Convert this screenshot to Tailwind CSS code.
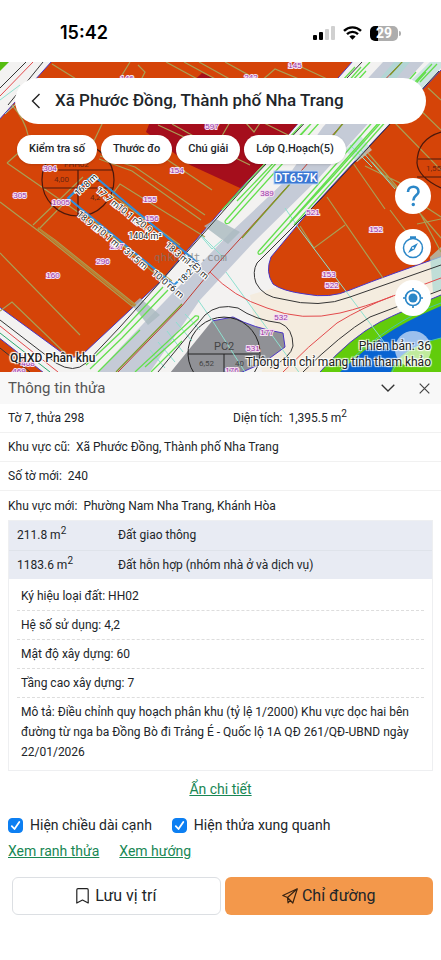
<!DOCTYPE html>
<html lang="vi">
<head>
    <meta charset="UTF-8">
    <meta name="viewport" content="width=device-width, initial-scale=1.0">
    <title>Thông tin thửa</title>
    <script src="https://cdn.jsdelivr.net/npm/@tailwindcss/browser@4"></script>
</head>
<body class="bg-white font-[Roboto,sans-serif] text-[#212529]">

    <!-- Status bar -->
    <div class="h-[62px] pl-15 pr-10 pt-1 flex items-center justify-between text-black">
        <span class="font-[Inter,sans-serif] text-lg font-semibold">15:42</span>
        <div class="flex items-center gap-2">
            <svg class="w-[22px] h-[14px]" viewBox="0 0 22 14">
                <rect x="0" y="9" width="4" height="5" rx="1"/>
                <rect x="6" y="6" width="4" height="8" rx="1"/>
                <g fill="#d0d0d0"><rect x="12" y="3" width="4" height="11" rx="1"/><rect x="18" y="0" width="4" height="14" rx="1"/></g>
            </svg>
            <svg class="w-[19px] h-[14px]" viewBox="0 0 19 14" fill="none" stroke="#000" stroke-width="2.4">
                <path d="M1 4.8a12.2 12.2 0 0 1 17 0M4 8.1a7.9 7.9 0 0 1 11 0"/>
                <path d="M6.4 10.6a4.6 4.6 0 0 1 6.2 0L9.5 13.8z" fill="#000" stroke="none"/>
            </svg>
            <div class="flex items-center gap-px">
                <div class="w-7 h-[15px] rounded-[5px] bg-linear-to-r from-black from-30% to-[#adadad] to-30% flex items-center justify-center text-white text-sm font-bold">29</div>
                <div class="w-[2px] h-[5px] rounded-r bg-[#adadad]"></div>
            </div>
        </div>
    </div>

    <!-- Map -->
    <section class="relative h-[310px] overflow-hidden px-[15px] pt-4 bg-[#f3f2f1]">
        <svg class="absolute inset-0 w-full h-full" viewBox="0 62 441 310" preserveAspectRatio="xMidYMid slice" fill="none">
            <!-- side road -->
            <path d="M250 295L285 285L441 258V372H262z" fill="#f4ecdf"/>
            <!-- planned land -->
            <g fill="#d54408" stroke="#4b35c5" stroke-width="1">
                <path d="M52 61L353 61L220 212L160 282L84 353Q73 362 61 352L-2 306V121z"/>
                <path d="M443 68L402 111L353 163L310 210L271 257Q265 272 273 284Q282 291 305 294Q330 299 350 290Q370 282 395 273L443 256z"/>
                <path d="M-2 337L44 373H-2z"/>
            </g>
            <path d="M0 62H9L0 71z" fill="#56bd10"/>
            <path d="M150 122L202 73L218 80L299 122L263 165L240 188L190 165L146 132z" fill="#a50e1c"/>

            <!-- main road -->
            <path d="M98 372L120 348L230 233L283 183L323 127L383 62H424L365 127L317 180L253 243L200 300L150 372z" fill="#c5cbd7"/>
            <path d="M204 226L216 219L240 232L228 244zM132 305L140 298L160 315L148 325z" fill="#a9b9bf" opacity=".8"/>
            <path d="M398 93L430 62H441V68L402 110zM345 150L360 135L372 150L357 162z" fill="#bcdedb" opacity=".7"/>
            <path d="M394 62H410L362 119H345zM430 257L441 247V290L433 292z" fill="#a9d8d3" opacity=".7"/>

            <!-- park and river -->
            <path d="M441 295Q400 312 380 322Q350 338 320 372H441z" fill="#62cc0b"/>
            <path d="M441 306Q405 321 382 337Q361 352 340 372H391Q397 349 441 338z" fill="#0863d2"/>
            <path d="M441 303Q390 321 340 370M441 338Q404 346 392 372" stroke="#48c6a7"/>
            <path d="M441 295Q400 312 380 322Q350 338 320 372" stroke="#4b35c5"/>

            <!-- PC2 plot -->
            <path d="M170 373L212 321L233 317Q253 328 283 333L285 347L263 363L240 373z" fill="#909196"/>
            <path d="M212 321L233 317Q253 328 283 333L285 347L263 363L240 373" stroke="#4b35c5"/>
            <path d="M194 373A36 36 0 1 1 254 373M188 354H259M224 354V372" stroke="#222"/>

            <!-- parcel borders -->
            <g stroke="#a99f55" stroke-width="1.2">
                <path d="M52 64L102 95M130 62L119 80M138 65L145 72L140 82M166 62L214 88M184 62L232 88M199 62L246 88M225 62L285 95M260 82L275 69L330 92M295 64L338 84"/>
                <path d="M12 105Q25 120 28 135M103 122L92 145M7 163L75 210L172 281M0 202L45 236L133 307M7 163L33 140M100 156L135 167L205 215M99 159L132 171L201 220M112 195L120 184L205 237M112 195L180 245M83 177L33 225M89 178L38 230M38 228L55 240L136 305M68 198L160 278M0 253L80 335M0 311L12 302L66 354M153 150L212 190M158 125L212 150"/>
                <path d="M300 226L314 248L345 225M327 197L383 278M390 210L420 250M353 163L385 209M368 153L441 238M372 162L395 187L441 217M395 123L441 170M412 102L441 130M428 88L441 100M365 166L400 183L403 195M417 224L441 219M421 215L441 252"/>
                <path d="M172 124L215 148L230 122M215 148L250 165M245 122L254 132L260 123M262 122L290 136"/>
            </g>
            <path d="M38 228L135 306" stroke="#b98535" stroke-width="2"/>

            <!-- teal guides -->
            <g stroke="#8ce0cf">
                <path d="M198 300L212 320L245 372M285 208L300 230L390 350M226 272L341 430M200 235L212 249L222 240M150 350L165 368M158 342L175 362M167 331L183 352M176 322L192 341M185 314L200 330"/>
                <path d="M350 145L372 167M361 150L395 189M383 85L410 112M380 98L395 113M0 100L20 85M5 114L30 91M201 235L225 259"/>
            </g>

            <!-- lane lines -->
            <g stroke="#64df4e" stroke-width="1.3">
                <path d="M86 365L120 333L163 287M90 369L122 338L168 290M98 372L140 330M145 367L198 319Q200 315 195 316L135 372M151 372L182 341"/>
                <path d="M225 221L361 67M229 223L366 71M225 221Q225 225 229 223M237 201L370 62M222 210L355 67"/>
                <path d="M258 252L330 171L416 72M262 253L335 174L426 72M258 252Q258 256 262 253M290 222L398 101M294 225L404 101M420 82L437 64M415 82L432 64"/>
            </g>
            <path d="M118 372L182 306L210 272L287 187L345 121L402 62" stroke="#c33a30"/>
            <path d="M116 372L182 304M242 238L290 184M318 154L345 121M390 75L403 61" stroke="#7b9b26" stroke-width="1.2"/>
            <g stroke="#353535">
                <path d="M0 320L56 363Q74 374 86 363L120 327L187 252L250 181L362 62M0 348L30 372M26 62L0 88M43 62L8 105"/>
                <path d="M439 71L320 200L277 243L257 263Q252 272 256 283Q263 297 282 299Q320 309 350 297L441 265"/>
                <path d="M158 372L205 315Q218 303 238 308Q255 320 280 323Q293 328 293 346Q291 357 270 368M441 290L370 317Q340 335 303 372"/>
            </g>
            <path d="M0 326L58 372M33 62L0 96M210 272Q233 297 267 308Q302 322 340 313Q365 307 393 296L441 278M283 372Q307 347 337 323Q363 307 393 296" stroke="#e34a4c"/>
            <path d="M0 333L50 372" stroke="#2aa870"/>

            <!-- index circles -->
            <g stroke="#4a180c" stroke-width="1.2">
                <circle cx="78" cy="180" r="36"/>
                <path d="M43 170H113M43 188H113M78 170V216"/>
                <path d="M441 132Q417 139 417 163Q418 177 441 188M418 159H441M417 177H441"/>
            </g>
            <g fill="#6a2411" font-size="8" font-family="Roboto">
                <text x="64" y="167">FHH02</text><text x="54" y="182">4,00</text><text x="91" y="182">60</text><text x="90" y="200">4,2</text><text x="426" y="171">1,55</text>
                <text x="214" y="350" font-size="11" fill="#444">PC2</text><text x="199" y="366" fill="#444">6,52</text><text x="235" y="366" fill="#444">40</text>
            </g>

            <!-- selected parcel -->
            <path d="M93 175L198 263L174 285L68 198z" stroke="#2d8fdd" stroke-width="2"/>

            <!-- parcel numbers -->
            <g fill="#9735a8" stroke="#f6dff1" stroke-width="2" paint-order="stroke" font-size="8" font-family="Liberation Sans" text-anchor="middle">
                <text x="127" y="81">146</text><text x="295" y="68">145</text><text x="251" y="80">242</text><text x="212" y="129">597</text>
                <text x="50" y="171">304</text><text x="20" y="198">305</text><text x="61" y="205">1005</text><text x="177" y="173">154</text>
                <text x="150" y="202">155</text><text x="152" y="221">156</text><text x="117" y="249">297</text><text x="103" y="264">296</text>
                <text x="53" y="278">160</text><text x="28" y="366">468</text><text x="19" y="374">469</text><text x="267" y="196">389</text>
                <text x="313" y="215">521</text><text x="376" y="232">152</text><text x="329" y="277">153</text><text x="332" y="288">522</text>
                <text x="281" y="320">532</text><text x="267" y="335">177</text><text x="253" y="351">531</text><text x="232" y="373">176</text>
            </g>

            <!-- edge lengths -->
            <text x="154" y="261" fill="#777" opacity=".7" font-size="11" font-family="DejaVu Sans Mono">qhkhsdt.com</text>
            <g fill="#222" stroke="#fff" stroke-width="2" paint-order="stroke" font-size="9" font-family="Roboto" text-anchor="middle">
                <text transform="translate(88 187) rotate(-43)">16.8 m</text>
                <text transform="translate(106 200) rotate(40)">17.7 m</text>
                <text transform="translate(127 217) rotate(40)">10.1 m</text>
                <text transform="translate(146 231) rotate(40)">20.9 m</text>
                <text transform="translate(87 224) rotate(40)">18.9 m</text>
                <text transform="translate(106 239) rotate(40)">10.1 m</text>
                <text transform="translate(134 261) rotate(40)">31.5 m</text>
                <text transform="translate(175 255) rotate(40)">18.3 m</text>
                <text transform="translate(195 271) rotate(40)">12.0 m</text>
                <text transform="translate(191 275) rotate(-46)">18.2 m</text>
                <text transform="translate(162 283) rotate(40)">10.0 m</text>
                <text transform="translate(175 294) rotate(40)">6 m</text>
                <text x="145" y="239">1404 m²</text>
            </g>
            <rect x="274" y="171" width="44" height="13" fill="#3b77d3" stroke="#b9d4f5"/>
            <text x="296" y="182" fill="#fff" font-size="12" font-weight="500" font-family="Roboto" text-anchor="middle">DT657K</text>
        </svg>

        <!-- Location bar -->
        <header class="relative h-[46px] rounded-full bg-white flex items-center pl-3">
            <button aria-label="Quay lại" class="w-7 h-8 flex items-center pl-1">
                <svg class="w-[10px] h-4" viewBox="0 0 10 16" fill="none" stroke="#222" stroke-width="1.4"><path d="M8.5 1L1.5 8L8.5 15"/></svg>
            </button>
            <h1 class="text-[17px] font-medium">Xã Phước Đồng, Thành phố Nha Trang</h1>
        </header>

        <!-- Map tools -->
        <div class="relative mt-[11px] ml-[2px] flex gap-1 text-[11px] font-medium whitespace-nowrap">
            <button class="h-[29px] px-3 rounded-full bg-white shadow-sm">Kiểm tra số</button>
            <button class="h-[29px] px-3 rounded-full bg-white shadow-sm">Thước đo</button>
            <button class="h-[29px] px-3 rounded-full bg-white shadow-sm">Chú giải</button>
            <button class="h-[29px] px-3 rounded-full bg-white shadow-sm">Lớp Q.Hoạch(5)</button>
        </div>

        <!-- Floating buttons -->
        <div class="absolute right-[10px] top-[116px] flex flex-col gap-[15px]">
            <button aria-label="Trợ giúp" class="size-9 rounded-full bg-white flex items-center justify-center">
                <svg class="size-6" viewBox="0 0 24 24" fill="none" stroke="#2b87c8" stroke-width="2.6"><path d="M7 8C7 1 18 1 17.500 8C17.200 11.500 12.300 11.500 12.300 16.500"/><circle cx="12.300" cy="20.500" r="1.700" fill="#2b87c8" stroke="none"/></svg>
            </button>
            <button aria-label="La bàn" class="size-9 rounded-full bg-white flex items-center justify-center">
                <svg class="size-6" viewBox="0 0 24 24" fill="none" stroke="#2b87c8" stroke-width="1.500"><circle cx="12" cy="13" r="9.500"/><path d="M9 2.500H15" stroke-width="2.500"/><path d="M17 8L13.500 14.500L7 18L10.500 11.500z" fill="#2b87c8" stroke="none"/><circle cx="12" cy="13" r="1" fill="#fff" stroke="none"/></svg>
            </button>
            <button aria-label="Vị trí của tôi" class="size-9 rounded-full bg-white flex items-center justify-center">
                <svg class="size-6" viewBox="0 0 24 24" fill="none" stroke="#2b87c8" stroke-width="1.700"><circle cx="12" cy="12" r="7.500"/><circle cx="12" cy="12" r="4.500" fill="#2b87c8" stroke="none"/><path d="M12 2V5M12 19V22M2 12H5M19 12H22"/></svg>
            </button>
            <span class="size-9 rounded-full bg-white/60"></span>
        </div>

        <!-- Map captions -->
        <div class="absolute inset-x-[10px] bottom-[2px] flex items-end justify-between text-xs leading-4 text-[#222] [text-shadow:1px_1px_1px_#fff,-1px_-1px_1px_#fff,1px_-1px_1px_#fff,-1px_1px_1px_#fff]">
            <p class="font-medium pb-1">QHXD Phân khu</p>
            <p class="text-right">Phiên bản: 36<br>Thông tin chỉ mang tính tham khảo</p>
        </div>
    </section>

    <!-- Parcel panel -->
    <main class="text-xs leading-5">
        <div class="h-8 px-2 bg-[#f8f8f8] flex items-center justify-between text-[#555]">
            <h2 class="text-[15px]">Thông tin thửa</h2>
            <div class="flex items-center gap-5 pr-[2px]">
                <button aria-label="Thu gọn" class="size-5 flex items-center justify-center">
                    <svg class="w-[14px] h-2" viewBox="0 0 14 8" fill="none" stroke="#333" stroke-width="1.300"><path d="M.7 .7L7 7L13.300 .7"/></svg>
                </button>
                <button aria-label="Đóng" class="w-[13px] h-5 flex items-center justify-center">
                    <svg class="size-[11px]" viewBox="0 0 11 11" fill="none" stroke="#444" stroke-width="1.200"><path d="M.7 .7L10.300 10.300M10.300 .7L.7 10.300"/></svg>
                </button>
            </div>
        </div>
        <div class="h-[29px] px-2 border-b border-[#f1f1f1] grid grid-cols-[225fr_200fr] items-center">
            <p>Tờ 7, thửa 298</p>
            <p>Diện tích:&nbsp; 1,395.5 m<sup class="text-[10px]">2</sup></p>
        </div>
        <p class="h-[29px] px-2 border-b border-[#f1f1f1] flex items-center">Khu vực cũ:&nbsp; Xã Phước Đồng, Thành phố Nha Trang</p>
        <p class="h-[29px] px-2 border-b border-[#f1f1f1] flex items-center">Số tờ mới:&nbsp; 240</p>
        <p class="h-[29px] px-2 flex items-center">Khu vực mới:&nbsp; Phường Nam Nha Trang, Khánh Hòa</p>

        <!-- Land use -->
        <div class="mx-2 border border-[#eeeff1]">
            <table class="w-full table-fixed bg-[#e8ebf3]">
                <tbody>
                    <tr class="h-[29px] border-b border-[#dfe3ea]"><td class="w-[109px] pl-2">211.8 m<sup class="text-[10px]">2</sup></td><td>Đất giao thông</td></tr>
                    <tr class="h-[29px]"><td class="pl-2">1183.6 m<sup class="text-[10px]">2</sup></td><td>Đất hỗn hợp (nhóm nhà ở và dịch vụ)</td></tr>
                </tbody>
            </table>
            <ul class="px-2 pt-[3px] pb-2">
                <li class="h-[29px] px-1 border-b border-dashed border-[#ddd] flex items-center">Ký hiệu loại đất: HH02</li>
                <li class="h-[29px] px-1 border-b border-dashed border-[#ddd] flex items-center">Hệ số sử dụng: 4,2</li>
                <li class="h-[29px] px-1 border-b border-dashed border-[#ddd] flex items-center">Mật độ xây dựng: 60</li>
                <li class="h-[29px] px-1 border-b border-dashed border-[#ddd] flex items-center">Tầng cao xây dựng: 7</li>
                <li class="px-1 pt-1">Mô tả: Điều chỉnh quy hoạch phân khu (tỷ lệ 1/2000) Khu vực dọc hai bên đường từ nga ba Đồng Bò đi Trảng É - Quốc lộ 1A QĐ 261/QĐ-UBND ngày 22/01/2026</li>
            </ul>
        </div>
        <div class="pt-2 text-center text-sm leading-5"><a href="#" class="text-[#198754] underline">Ẩn chi tiết</a></div>

        <!-- Display options -->
        <div class="px-2 pt-4 flex gap-5 text-sm leading-5">
            <label class="flex items-center gap-[7px]">
                <span class="grid">
                    <input type="checkbox" checked class="peer [grid-area:1/1] appearance-none size-[15px] rounded border border-[#aaa] checked:border-[#0d7ff2] checked:bg-[#0d7ff2]">
                    <svg class="[grid-area:1/1] size-[15px] pointer-events-none hidden peer-checked:block" viewBox="0 0 15 15" fill="none" stroke="#fff" stroke-width="1.800" stroke-linecap="round" stroke-linejoin="round"><path d="M3.800 8.200L6.500 11L11.300 4"/></svg>
                </span>
                Hiện chiều dài cạnh
            </label>
            <label class="flex items-center gap-[7px]">
                <span class="grid">
                    <input type="checkbox" checked class="peer [grid-area:1/1] appearance-none size-[15px] rounded border border-[#aaa] checked:border-[#0d7ff2] checked:bg-[#0d7ff2]">
                    <svg class="[grid-area:1/1] size-[15px] pointer-events-none hidden peer-checked:block" viewBox="0 0 15 15" fill="none" stroke="#fff" stroke-width="1.800" stroke-linecap="round" stroke-linejoin="round"><path d="M3.800 8.200L6.500 11L11.300 4"/></svg>
                </span>
                Hiện thửa xung quanh
            </label>
        </div>
        <div class="px-2 pt-[6px] flex gap-5 text-sm leading-5 text-[#198754]">
            <a href="#" class="underline">Xem ranh thửa</a>
            <a href="#" class="underline">Xem hướng</a>
        </div>

        <!-- Actions -->
        <div class="pl-3 pr-2 pt-4 pb-11 grid grid-cols-2 gap-1 text-base">
            <button class="h-[38px] rounded-md border border-[#dcdfe3] flex items-center justify-center gap-[6px]">
                <svg class="w-[13px] h-4" viewBox="0 0 13 16" fill="none" stroke="#222" stroke-width="1.200" stroke-linejoin="round"><path d="M.8 2Q.8 .7 2 .7H11Q12.200 .7 12.200 2V15L6.500 12L.8 15z"/></svg>
                Lưu vị trí
            </button>
            <button class="h-[38px] rounded-md bg-[#f3984b] flex items-center justify-center gap-1">
                <svg class="size-4" viewBox="0 0 16 16" fill="none" stroke="#3a2412" stroke-width="1.200" stroke-linejoin="round"><path d="M15.300 .8L.8 7.500L5.500 9.500L10.800 15zM15.300 .8L5.500 9.500L6 14.800L8.300 12.400"/></svg>
                Chỉ đường
            </button>
        </div>
    </main>

</body>
</html>
